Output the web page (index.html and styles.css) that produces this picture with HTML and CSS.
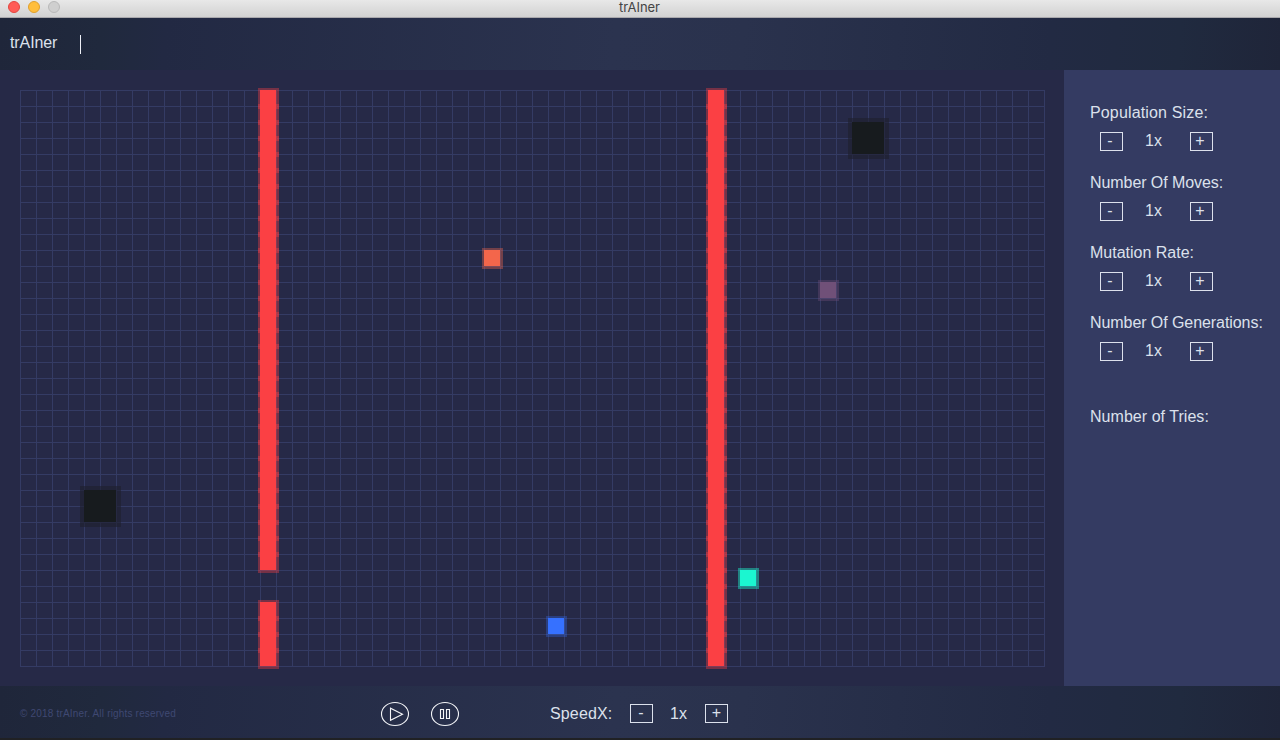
FILE: index.html
```html
<!DOCTYPE html>
<html lang="en">
<head>
<meta charset="utf-8">
<title>trAIner</title>
<link rel="stylesheet" href="styles.css">
</head>
<body>
<div class="window">
  <div class="titlebar">
    <div class="lights"><i class="light close"></i><i class="light minimize"></i><i class="light inactive"></i></div>
    <span class="window-title">trAIner</span>
  </div>
  <header class="topbar"><span class="brand">trAIner</span><i class="divider"></i></header>
  <main class="content">
    <section class="stage">
      <svg class="board" width="1029" height="582" viewBox="16 87 1029 582" shape-rendering="crispEdges">
        <defs>
          <pattern id="cells" x="20" y="90" width="16" height="16" patternUnits="userSpaceOnUse"><path class="grid-line" d="M0 0H16V1H1V16H0Z"/></pattern>
          <pattern id="seams" x="0" y="88" width="21" height="16" patternUnits="userSpaceOnUse"><rect class="seam" width="21" height="5"/></pattern>
        </defs>
        <rect x="20" y="90" width="1025" height="577" fill="url(#cells)"/>
        <g class="wall">
          <rect class="halo" x="258" y="88" width="21" height="485"/>
          <rect x="258" y="104" width="21" height="453" fill="url(#seams)"/>
          <rect x="260" y="90" width="16" height="480"/>
          <rect class="halo" x="258" y="600" width="21" height="69"/>
          <rect x="258" y="616" width="21" height="37" fill="url(#seams)"/>
          <rect x="260" y="602" width="16" height="64"/>
          <rect class="halo" x="706" y="88" width="21" height="581"/>
          <rect x="706" y="104" width="21" height="549" fill="url(#seams)"/>
          <rect x="708" y="90" width="16" height="576"/>
        </g>
        <g class="pit"><rect class="halo" x="848" y="118" width="41" height="41"/><rect x="852" y="122" width="32" height="32"/></g>
        <g class="pit"><rect class="halo" x="80" y="486" width="41" height="41"/><rect x="84" y="490" width="32" height="32"/></g>
        <g class="orange"><rect class="halo" x="482" y="248" width="21" height="21"/><rect x="484" y="250" width="16" height="16"/></g>
        <g class="mauve"><rect class="halo" x="818" y="280" width="21" height="21"/><rect x="820" y="282" width="16" height="16"/></g>
        <g class="teal"><rect class="halo" x="738" y="568" width="21" height="21"/><rect x="740" y="570" width="16" height="16"/></g>
        <g class="blue"><rect class="halo" x="546" y="616" width="21" height="21"/><rect x="548" y="618" width="16" height="16"/></g>
      </svg>
    </section>
    <aside class="sidebar">
      <div class="setting"><div class="label population">Population Size:</div><div class="stepper"><span class="step">-</span><span class="value">1x</span><span class="step">+</span></div></div>
      <div class="setting"><div class="label moves">Number Of Moves:</div><div class="stepper"><span class="step">-</span><span class="value">1x</span><span class="step">+</span></div></div>
      <div class="setting"><div class="label mutation">Mutation Rate:</div><div class="stepper"><span class="step">-</span><span class="value">1x</span><span class="step">+</span></div></div>
      <div class="setting"><div class="label generations">Number Of Generations:</div><div class="stepper"><span class="step">-</span><span class="value">1x</span><span class="step">+</span></div></div>
      <div class="label tries">Number of Tries:</div>
    </aside>
  </main>
  <footer class="footer">
    <span class="copyright">© 2018 trAIner. All rights reserved</span>
    <div class="playback">
      <svg width="30" height="26" viewBox="0 0 30 26"><ellipse cx="15" cy="13" rx="13.5" ry="11.5"/><path d="M10.5 7.2V19.3L22.5 13.2Z"/></svg>
      <svg width="30" height="26" viewBox="0 0 30 26"><path class="outline" d="M.5 .5H29.5V25.5H.5Z"/><ellipse cx="15" cy="13" rx="13.5" ry="11.5"/><path d="M10.5 8.5H13.5V17.5H10.5ZM16.5 8.5H19.5V17.5H16.5Z"/></svg>
    </div>
    <div class="speed"><span class="speed-label">SpeedX:</span><span class="step slower">-</span><span class="value">1x</span><span class="step">+</span></div>
  </footer>
</div>
</body>
</html>
```

FILE: styles.css
```css
* { box-sizing: border-box; }
body {
  margin: 0;
  overflow: hidden;
  background: #202124;
  color: #dce1ec;
  font: 16px/18px "Liberation Sans", Arial, sans-serif;
}
.window { display: flex; flex-direction: column; width: 1280px; height: 740px; border-bottom: 2px solid #202124; }
.titlebar {
  display: grid;
  grid-template-columns: 1fr auto 1fr;
  height: 18px;
  background: linear-gradient(#e8e8e8, #d2d2d2);
  border-bottom: 1px solid #aaa9ad;
}
.lights { display: flex; gap: 8px; padding: 1px 0 0 8px; }
.light { width: 12px; height: 12px; border: 1px solid; border-radius: 50%; }
.close { background: #ff5b56; border-color: #e2463f; }
.minimize { background: #ffbe3c; border-color: #e0a02d; }
.inactive { background: #cfcfcf; border-color: #b9b9b9; }
.window-title { margin-left: -1px; color: #444; font: 13px/15px Inter, "Liberation Sans", sans-serif; letter-spacing: -0.05px; }
.topbar, .footer {
  display: flex;
  flex: none;
  background: linear-gradient(94deg, #1f263a 0%, #20293d 8%, #222943 13%, #2b334f 48%, #2a324d 58%, #222a43 82%, #202a3f 92%, #1f2539 100%);
}
.topbar { height: 52px; padding: 16px 10px; gap: 22px; }
.brand { width: 48px; letter-spacing: -0.1px; }
.divider { width: 1px; height: 19px; margin-top: 1px; background: #eef0f7; }
.content { display: flex; height: 616px; }
.stage { width: 1064px; padding: 17px 0 0 16px; background: #262947; }
.board { display: block; }
.grid-line { fill: #343b64; }
.halo { opacity: .38; }
.wall { fill: #fb4044; }
.seam { fill: #fb4044; opacity: .38; }
.pit { fill: #171b1e; }
.pit .halo { fill: #1e2030; opacity: .65; }
.orange { fill: #f3664b; }
.mauve { fill: #705078; }
.teal { fill: #1bf6d0; }
.teal .halo { opacity: .44; }
.blue { fill: #3671ff; }
.blue .halo { opacity: .3; }
.sidebar { flex: 1; padding: 34px 0 0 26px; background: #343b62; }
.setting { height: 70px; }
.label { white-space: nowrap; }
.population { letter-spacing: .15px; }
.moves, .generations { letter-spacing: -.07px; }
.stepper { display: flex; padding: 10px 0 0 10px; }
.step { width: 23px; height: 19px; border: 1px solid #dce1ec; text-align: center; line-height: 16px; padding-right: 3px; }
.value { width: 67px; line-height: 18px; padding-left: 22px; }
.tries { margin-top: 24px; letter-spacing: .04px; }
.footer { height: 52px; }
.copyright { width: 360px; margin: 19px 0 0 20px; color: #3f4872; font-size: 10px; letter-spacing: .18px; }
.playback { display: flex; gap: 20px; padding-top: 15px; }
.playback svg { fill: none; stroke: #f4f5f8; stroke-width: 1.1; }
.playback .outline { stroke: #262e4a; stroke-width: 1; }
.speed { display: flex; padding: 18px 0 0 90px; }
.speed-label { width: 80px; margin-top: 1px; letter-spacing: .15px; }
.speed .value { width: 52px; padding-left: 17px; margin-top: 1px; }
.speed .step { padding-right: 0; }
.speed .slower { padding-right: 1px; }
```
